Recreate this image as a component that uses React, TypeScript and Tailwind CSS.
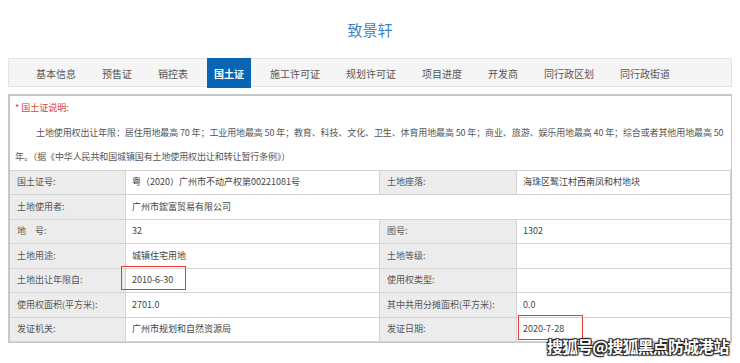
const tabs = [
  "基本信息",
  "预售证",
  "销控表",
  "国土证",
  "施工许可证",
  "规划许可证",
  "项目进度",
  "开发商",
  "同行政区划",
  "同行政街道",
];

type Row = [string, string, string?, string?];

const rows: Row[] = [
  ["国土证号:", "粤（2020）广州市不动产权第00221081号", "土地座落:", "海珠区鹭江村西南凤和村地块"],
  ["土地使用者:", "广州市鋐富贸易有限公司"],
  ["地　号:", "32", "图号:", "1302"],
  ["土地用途:", "城镇住宅用地", "土地等级:", ""],
  ["土地出让年限自:", "2010-6-30", "使用权类型:", ""],
  ["使用权面积(平方米):", "2701.0", "其中共用分摊面积(平方米):", "0.0"],
  ["发证机关:", "广州市规划和自然资源局", "发证日期:", "2020-7-28"],
];

const font = "font-['Noto_Sans_CJK_SC','Noto_Sans',sans-serif]";

function Label({ text }: { text: string }) {
  return (
    <div className="flex items-center border-r border-b border-[#d4d4d4] bg-[#ececec] pl-[7px] text-[#555]">
      {text}
    </div>
  );
}

function Value({ text, wide }: { text: string; wide?: boolean }) {
  return (
    <div
      className={
        "flex items-center border-r border-b border-[#d4d4d4] bg-white pl-[6px] text-[#444]" +
        (wide ? " col-span-3" : "")
      }
    >
      {text}
    </div>
  );
}

export default function App() {
  return (
    <div className={`relative h-[363px] w-[740px] overflow-hidden bg-white ${font}`}>
      <h1 className="pt-[20px] text-center text-[15px] leading-[20px] font-normal text-[#3b84c4]">
        致景轩
      </h1>

      <div className="mx-[8px] mt-[18px] flex h-[29px] items-stretch border border-[#e4e4e4] bg-[#f5f5f5] pl-[20px]">
        {tabs.map((t, i) => (
          <div
            key={t}
            className={
              "-mt-px flex h-[30px] items-center px-[7px] text-[10px] " +
              (i === 0 ? "" : "ml-[12px] ") +
              (t === "国土证" ? "bg-[#0865b3] font-bold text-white" : "text-[#555]")
            }
          >
            {t}
          </div>
        ))}
      </div>

      <div className="mx-[8px] mt-[7px] border-t-2 border-l-2 border-r border-b border-[#c8c8c8] text-[9px] leading-[24.5px]">
        <p className="pl-[5px] text-[#e0393e]">* 国土证说明:</p>
        <p className="pl-[5px] pr-[2px] indent-[21px] tracking-[-0.12px] text-[#555]">
          土地使用权出让年限：居住用地最高 70 年；工业用地最高 50 年；教育、科技、文化、卫生、体育用地最高 50 年；商业、旅游、娱乐用地最高 40 年；综合或者其他用地最高 50 年。（据《中华人民共和国城镇国有土地使用权出让和转让暂行条例》）
        </p>
        <div className="grid grid-cols-[116px_254px_137px_1fr] auto-rows-[24.5px] border-t border-[#d4d4d4]">
          {rows.map((r) =>
            r.length === 2 ? (
              <div key={r[0]} className="contents">
                <Label text={r[0]} />
                <Value text={r[1]} wide />
              </div>
            ) : (
              <div key={r[0]} className="contents">
                <Label text={r[0]} />
                <Value text={r[1]} />
                <Label text={r[2] ?? ""} />
                <Value text={r[3] ?? ""} />
              </div>
            )
          )}
        </div>
      </div>

      {/* annotation boxes */}
      <div className="absolute left-[121px] top-[266px] h-[24px] w-[65px] border border-[#e53935]" />
      <div className="absolute left-[518px] top-[315px] h-[25px] w-[65px] border border-[#e53935]" />

      <div className="absolute left-[547px] top-[336px] text-[16px] leading-[20px] font-bold tracking-[-0.9px] text-white [text-shadow:0_0_1px_#222,1px_1px_1px_#222,-1px_-1px_1px_#222,1px_-1px_1px_#222,-1px_1px_1px_#222]">
        搜狐号@搜狐黑点防城港站
      </div>
    </div>
  );
}
